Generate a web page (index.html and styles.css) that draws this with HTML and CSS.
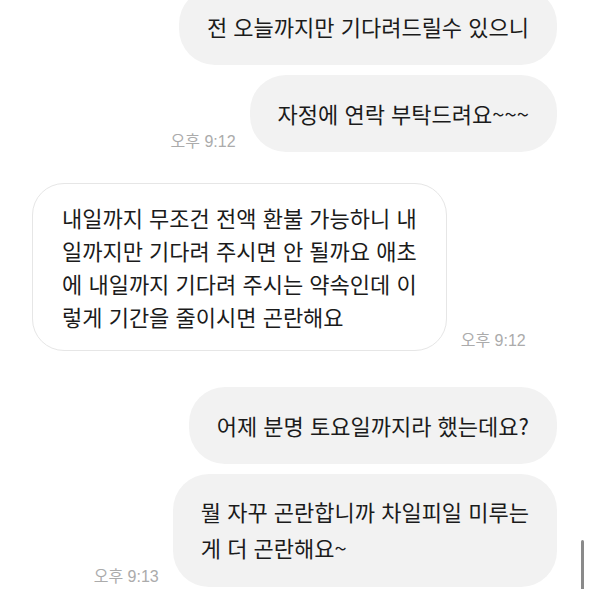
FILE: index.html
```html
<!DOCTYPE html>
<html lang="ko">
<head>
  <meta charset="UTF-8">
  <meta name="viewport" content="width=device-width, initial-scale=1.0">
  <title>채팅</title>
  <link rel="stylesheet" href="styles.css">
</head>
<body>
  <div class="chat">
    <div class="row mine">
      <div class="bubble sent">전 오늘까지만 기다려드릴수 있으니</div>
    </div>
    <div class="row mine">
      <span class="time">오후 9:12</span>
      <div class="bubble sent">자정에 연락 부탁드려요~~~</div>
    </div>
    <div class="row theirs">
      <div class="bubble received">내일까지 무조건 전액 환불 가능하니 내<br>일까지만 기다려 주시면 안 될까요 애초<br>에 내일까지 기다려 주시는 약속인데 이<br>렇게 기간을 줄이시면 곤란해요</div>
      <span class="time">오후 9:12</span>
    </div>
    <div class="row mine">
      <div class="bubble sent">어제 분명 토요일까지라 했는데요?</div>
    </div>
    <div class="row mine">
      <span class="time">오후 9:13</span>
      <div class="bubble sent tall">뭘 자꾸 곤란합니까 차일피일 미루는<br>게 더 곤란해요~</div>
    </div>
  </div>
  <div class="scrollbar"></div>
</body>
</html>
```

FILE: styles.css
```css
html, body {
  margin: 0;
  background: #ffffff;
  height: 100%;
  overflow: hidden;
}

body {
  font-family: "Noto Sans CJK KR", "Noto Sans", sans-serif;
  color: #1b1b1b;
  position: relative;
}

.chat {
  display: flex;
  flex-direction: column;
  gap: 10px;
  padding: 0 32px;
  margin-top: -12px;
}

.row {
  display: flex;
  align-items: flex-end;
  gap: 14px;
}

.mine {
  justify-content: flex-end;
}

.theirs {
  justify-content: flex-start;
  margin: 21px 0 26px;
}

.bubble {
  font-size: 22px;
  line-height: 33px;
  padding: 22px 28px;
  border-radius: 36px;
  white-space: nowrap;
}

.sent {
  background: #f2f2f2;
}

.tall {
  line-height: 36px;
  padding: 19px 28px 22px;
}

.received {
  background: #ffffff;
  border: 1px solid #e6e6e6;
  padding: 17px 29px;
  border-radius: 32px;
}

.time {
  font-family: "Liberation Sans", "Noto Sans CJK KR", sans-serif;
  font-size: 16px;
  color: #ababab;
  line-height: 20px;
  margin-bottom: 0;
}

.scrollbar {
  position: absolute;
  right: 5px;
  top: 540px;
  width: 3px;
  height: 60px;
  border-radius: 2px;
  background: #8a8a8a;
}
```
